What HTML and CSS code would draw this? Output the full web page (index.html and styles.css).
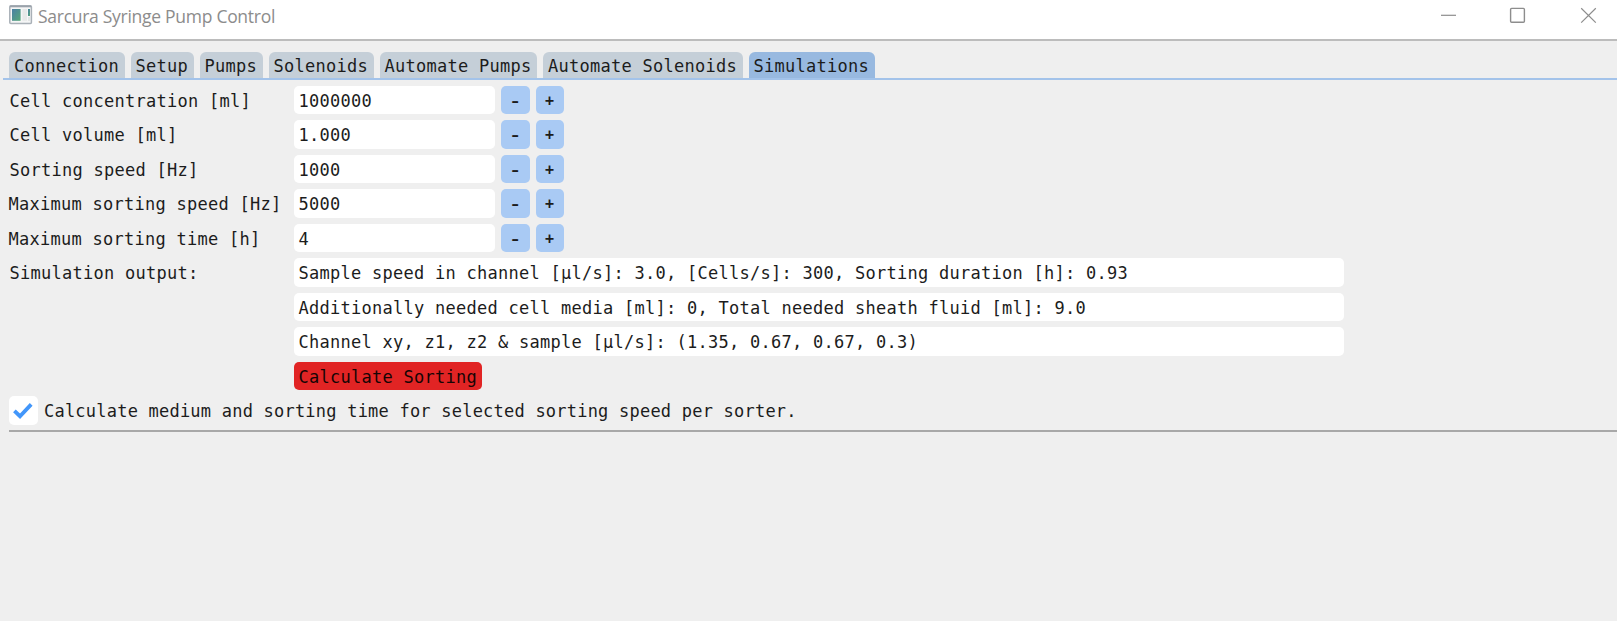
FILE: index.html
```html
<!DOCTYPE html>
<html lang="en">
<head>
<meta charset="utf-8">
<title>Sarcura Syringe Pump Control</title>
<link rel="stylesheet" href="styles.css">
</head>
<body>
<header class="titlebar">
  <svg class="app-icon" width="24" height="20" viewBox="0 0 24 20">
    <defs><linearGradient id="g" x1="0" y1="0" x2="1" y2="1"><stop offset="0" stop-color="#4a7fa5"/><stop offset="1" stop-color="#58a878"/></linearGradient></defs>
    <rect x="0.8" y="0.8" width="21.6" height="17.6" rx="1" fill="#f5f6f6" stroke="#a9b0b7" stroke-width="1.5"/>
    <path d="M1 1.5H22" stroke="#9aa2aa" stroke-width="1.6"/>
    <rect x="3" y="4" width="8.6" height="11.8" fill="url(#g)"/>
    <rect x="13.4" y="4" width="4.6" height="11.8" fill="#e8e8e8"/>
    <rect x="19" y="4" width="2" height="7" fill="url(#g)"/>
    <rect x="19" y="12" width="2" height="4" fill="#e3e5e5"/>
  </svg>
  <span class="title">Sarcura Syringe Pump Control</span>
  <svg class="controls" width="156" height="16" viewBox="0 0 156 16" fill="none" stroke="#8d8d8d">
    <path d="M0 8.3H15" stroke-width="1.2"/>
    <rect x="69.6" y="1.4" width="13.8" height="13.8" rx="1" stroke-width="1.4"/>
    <path d="M140.2 1.2L154.8 15.6M154.8 1.2L140.2 15.6" stroke-width="1.2"/>
  </svg>
</header>
<nav class="tabs">
  <span class="tab">Connection</span><span class="tab">Setup</span><span class="tab">Pumps</span><span class="tab">Solenoids</span><span class="tab">Automate Pumps</span><span class="tab">Automate Solenoids</span><span class="tab active">Simulations</span>
</nav>
<main class="form">
  <div class="row"><span class="label">Cell concentration [ml]</span><span class="field">1000000</span><span class="step minus">-</span><span class="step">+</span></div>
  <div class="row"><span class="label">Cell volume [ml]</span><span class="field">1.000</span><span class="step minus">-</span><span class="step">+</span></div>
  <div class="row"><span class="label">Sorting speed [Hz]</span><span class="field">1000</span><span class="step minus">-</span><span class="step">+</span></div>
  <div class="row"><span class="label wide">Maximum sorting speed [Hz]</span><span class="field">5000</span><span class="step minus">-</span><span class="step">+</span></div>
  <div class="row"><span class="label wide">Maximum sorting time [h]</span><span class="field">4</span><span class="step minus">-</span><span class="step">+</span></div>
  <div class="row"><span class="label">Simulation output:</span><span class="field output">Sample speed in channel [µl/s]: 3.0, [Cells/s]: 300, Sorting duration [h]: 0.93</span></div>
  <div class="row"><span class="label"></span><span class="field output">Additionally needed cell media [ml]: 0, Total needed sheath fluid [ml]: 9.0</span></div>
  <div class="row"><span class="label"></span><span class="field output">Channel xy, z1, z2 &amp; sample [µl/s]: (1.35, 0.67, 0.67, 0.3)</span></div>
  <div class="row"><span class="label"></span><span class="calc">Calculate Sorting</span></div>
  <div class="row"><span class="check"><svg width="20" height="17" viewBox="0 0 20 17" fill="none" stroke="#4296fa" stroke-width="3.8"><path d="M1.4 8.8L7 14.2L18.2 2.4"/></svg></span><span class="check-label">Calculate medium and sorting time for selected sorting speed per sorter.</span></div>
</main>
<div class="separator"></div>
</body>
</html>
```
FILE: styles.css
```css
* { box-sizing: border-box; }
body {
  margin: 0;
  height: 621px;
  overflow: hidden;
  background: #efefef;
  color: #1c1c1c;
  font-family: "DejaVu Sans Mono", monospace;
  font-size: 17px;
  letter-spacing: 0.265px;
  white-space: pre;
  display: flex;
  flex-direction: column;
}
.titlebar {
  height: 41px;
  flex: none;
  background: #fff;
  border-bottom: 2px solid #bcbcbc;
  display: flex;
  align-items: flex-start;
  padding: 5px 20px 0 9px;
}
.app-icon { flex: none; }
.title {
  margin-left: 5px;
  font: 17.5px/23px "Open Sans", "Noto Sans", sans-serif;
  letter-spacing: -0.28px;
  color: #8c8c8c;
}
.controls { margin-left: auto; margin-top: 2px; }
.tabs {
  height: 39px;
  flex: none;
  margin-left: 3px;
  padding: 11px 0 0 6px;
  display: flex;
  gap: 6px;
  border-bottom: 2px solid #a3c3ea;
}
.tab {
  padding: 0 5.5px 0 5px;
  line-height: 28px;
  background: #c5cfd8;
  border-radius: 6px 6px 0 0;
}
.tab.active { background: #98b9e0; }
.form {
  padding: 5.6px 0 0 9px;
  display: flex;
  flex-direction: column;
  gap: 6px;
}
.row {
  display: flex;
  gap: 6px;
  height: 28.5px;
  line-height: 31px;
}
.label { width: 279px; flex: none; padding-left: 0.5px; }
.label.wide { margin-left: -1px; width: 280px; }
.field {
  width: 201px;
  flex: none;
  padding-left: 4.5px;
  background: #fff;
  border-radius: 5px;
}
.output { width: 1050px; }
.step {
  width: 28.5px;
  text-align: center;
  font-size: 15px;
  font-weight: bold;
  background: #a9caf4;
  border-radius: 5px;
}
.minus { font-size: 23px; font-weight: normal; line-height: 28px; }
.calc {
  width: 187.5px;
  padding-left: 4.5px;
  background: #e12424;
  border-radius: 5px;
  color: #160404;
}
.check {
  width: 28.5px;
  background: #fff;
  border-radius: 5px;
  display: flex;
  align-items: center;
  justify-content: center;
}
.check-label { letter-spacing: 0.22px; padding-left: 0.5px; }
.separator {
  flex: none;
  height: 2px;
  margin: 5.3px 0 0 9px;
  background: #a8a8a8;
}
```
